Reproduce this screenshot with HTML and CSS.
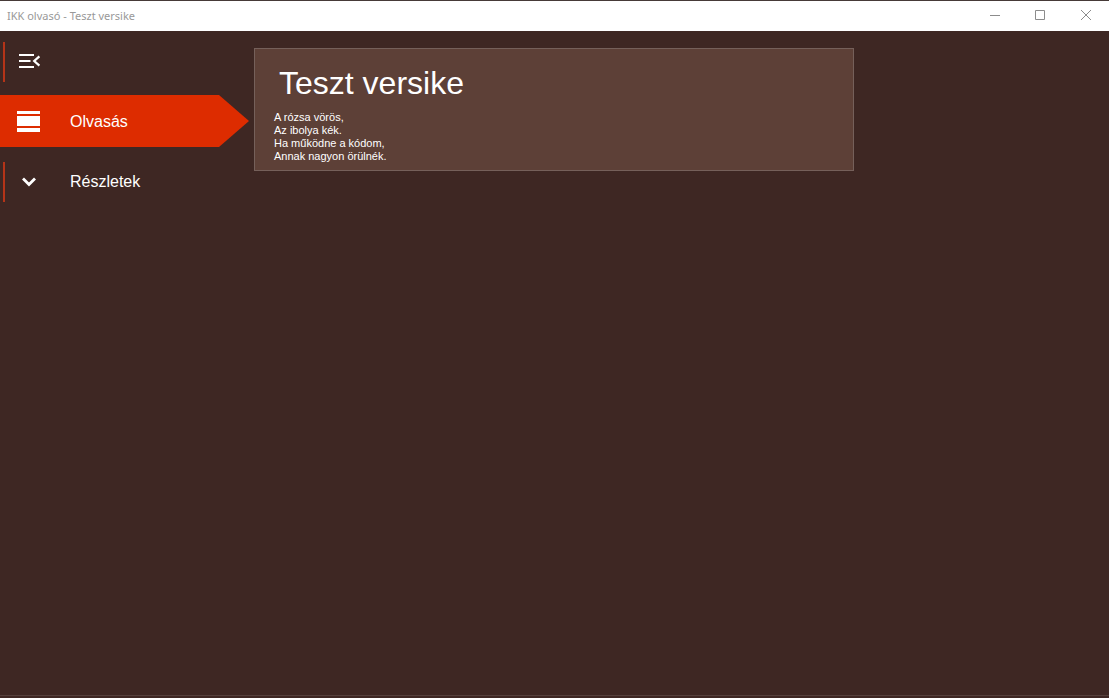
FILE: index.html
```html
<!DOCTYPE html>
<html lang="hu">
<head>
<meta charset="utf-8">
<title>IKK olvasó - Teszt versike</title>
<link rel="stylesheet" href="styles.css">
</head>
<body>
<div class="window">
  <header class="titlebar">
    <span class="titlebar-text">IKK olvasó - Teszt versike</span>
    <div class="controls">
      <button class="control" type="button" aria-label="Kis méret"><svg width="12" height="12" viewBox="0 0 12 12"><path d="M2 6.500h10"/></svg></button>
      <button class="control" type="button" aria-label="Teljes méret"><svg width="12" height="12" viewBox="0 0 12 12"><path d="M1.500 1.500h9v9h-9z"/></svg></button>
      <button class="control" type="button" aria-label="Bezárás"><svg width="12" height="12" viewBox="0 0 12 12"><path d="M1 1l10 10M11 1L1 11"/></svg></button>
    </div>
  </header>
  <div class="content">
    <nav class="sidebar">
      <button class="item" type="button" aria-label="Menü">
        <svg class="icon" viewBox="0 0 24 24"><path d="M2 6h15M2 12h11.500M2 18h15" stroke="#fff" stroke-width="2.200"/><path d="M22.400 7.400L17.200 12l5.200 4.600" fill="none" stroke="#fff" stroke-width="2.200"/></svg>
      </button>
      <button class="item item-active" type="button">
        <svg class="icon" viewBox="0 0 24 24"><path fill="#fff" d="M0 2h23v3H0zM0 7h23v10H0zM0 19h23v4H0z"/></svg>
        <span class="label">Olvasás</span>
      </button>
      <button class="item" type="button">
        <svg class="icon" viewBox="0 0 24 24"><path d="M6 9.500l6 6 6-6" fill="none" stroke="#fff" stroke-width="2.800"/></svg>
        <span class="label">Részletek</span>
      </button>
    </nav>
    <main class="reader">
      <article class="card">
        <h1 class="card-title">Teszt versike</h1>
        <p class="poem">A rózsa vörös,<br>Az ibolya kék.<br>Ha működne a kódom,<br>Annak nagyon örülnék.</p>
      </article>
    </main>
  </div>
</div>
</body>
</html>
```
FILE: styles.css
```css
* {
  box-sizing: border-box;
}

body {
  margin: 0;
  background: #3e2723;
  color: #fff;
  font-family: "Liberation Sans", Arial, sans-serif;
}

.window {
  display: flex;
  flex-direction: column;
  min-height: 100vh;
  border-top: 1px solid #463a38;
}

.titlebar {
  display: flex;
  justify-content: space-between;
  height: 30px;
  padding-left: 7px;
  background: #fff;
  color: #999;
}

.titlebar-text {
  font: 11px/30px "Noto Sans", sans-serif;
}

.controls {
  display: flex;
}

.control {
  display: flex;
  align-items: center;
  justify-content: center;
  width: 46px;
  padding: 0 0 2px;
  border: 0;
  background: none;
}

.control svg {
  fill: none;
  stroke: #8c8c8c;
}

.content {
  display: flex;
  flex: 1;
  margin-bottom: 2px;
  border-bottom: 1px solid #55403c;
}

.sidebar {
  display: flex;
  flex-direction: column;
  gap: 8px;
  width: 250px;
  padding-top: 4px;
}

.item {
  display: flex;
  align-items: center;
  gap: 29px;
  width: 249px;
  height: 52px;
  padding: 0 0 0 17px;
  border: 0;
  background: linear-gradient(#b53418, #b53418) 3px 7px / 2px 40px no-repeat;
  color: #fff;
  font: 16px/20px "Liberation Sans", Arial, sans-serif;
}

.item-active {
  background: #dd2c00;
  clip-path: polygon(0 0, calc(100% - 30px) 0, 100% 50%, calc(100% - 30px) 100%, 0 100%);
}

.label {
  padding-top: 2px;
}

.icon {
  width: 24px;
  height: 24px;
}

.reader {
  flex: 1;
  padding: 17px 4px;
}

.card {
  max-width: 600px;
  padding: 16px 19px 7px;
  border: 1px solid #75605a;
  background: #5d4037;
}

.card-title {
  margin: 0 0 9px;
  padding-left: 5px;
  font-size: 32px;
  font-weight: 400;
  line-height: 37px;
}

.poem {
  margin: 0;
  font-size: 11px;
  line-height: 13px;
}
```
